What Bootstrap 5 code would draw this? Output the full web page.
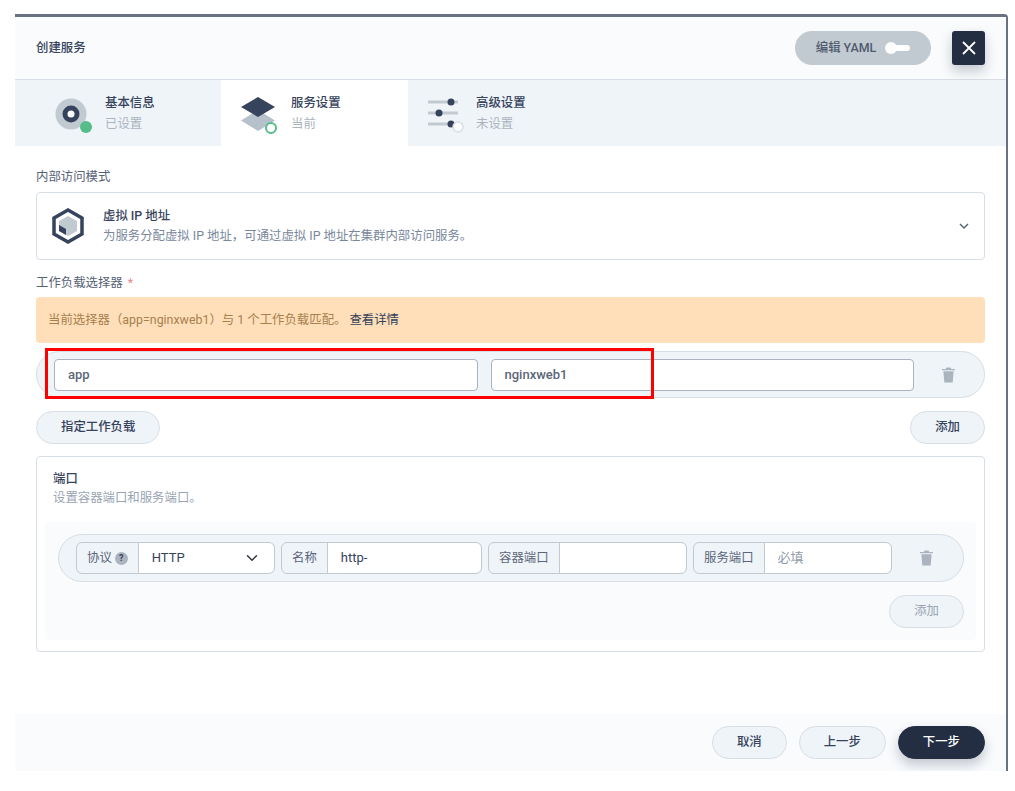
<!DOCTYPE html>
<html lang="zh-Hans">

<head>
    <meta charset="UTF-8">
    <meta name="viewport" content="width=device-width, initial-scale=1">
    <title>创建服务</title>
    <link href="https://cdn.jsdelivr.net/npm/bootstrap@5.3.3/dist/css/bootstrap.min.css" rel="stylesheet">
    <style>
        body {
            margin: 0;
            background: #fff;
            font-family: Roboto, "Noto Sans CJK SC", sans-serif;
            font-size: 12.4px;
            line-height: 1.5;
            color: #242e42;
        }

        .shell {
            margin: 14px 7px 0 15px;
            height: 757px;
            border-top: 3px solid #6a7282;
            border-right: 2px solid #6a7282;
            border-top-right-radius: 4px;
        }

        .top-bar {
            height: 63px;
            padding: 0 21px;
            background: #f9fbfd;
            border-bottom: 1px solid #d8dee5;
        }

        .page-title {
            font-weight: 500;
            color: #36435c;
        }

        .yaml-pill {
            width: 136px;
            height: 34px;
            border-radius: 17px;
            background: #c1c9d1;
            color: #4f5b6d;
            font-weight: 500;
            gap: 9px;
        }

        .yaml-knob {
            width: 25px;
            height: 12px;
            position: relative;
        }

        .yaml-knob::before {
            content: "";
            position: absolute;
            left: 8px;
            right: 0;
            top: 3px;
            height: 6px;
            border-radius: 3px;
            background: #fff;
        }

        .yaml-knob::after {
            content: "";
            position: absolute;
            left: 0;
            top: 0;
            width: 12px;
            height: 12px;
            border-radius: 50%;
            background: #fff;
        }

        .close-box {
            width: 33px;
            height: 34px;
            margin-left: 21px;
            border-radius: 3px;
            background: #242e42;
            box-shadow: 0 6px 12px rgba(36, 46, 66, .25);
        }

        .step-bar {
            height: 66px;
            background: #eff4f9;
        }

        .step-item {
            padding-top: 13px;
            padding-left: 40px;
            gap: 12px;
        }

        .step-one {
            width: 206px;
        }

        .step-two {
            width: 187px;
            padding-left: 20px;
            background: #fff;
        }

        .step-three {
            padding-left: 20px;
            gap: 10px;
        }

        .step-title {
            font-weight: 500;
            color: #36435c;
            line-height: 20px;
        }

        .step-note {
            color: #abb4be;
            line-height: 20px;
            margin-top: 1px;
        }

        .form-area {
            height: 568px;
            padding: 23px 21px 0;
        }

        .field-label {
            color: #566275;
            line-height: 16px;
            margin-bottom: 7px;
        }

        .mode-select {
            height: 68px;
            padding: 0 14px;
            gap: 18px;
            border: 1px solid #d8dee5;
            border-radius: 4px;
        }

        .mode-name {
            font-weight: 500;
            color: #36435c;
            line-height: 20px;
        }

        .mode-desc {
            color: #79879c;
            line-height: 20px;
        }

        .tip-bar {
            height: 46px;
            padding: 0 12px;
            border-radius: 4px;
            background: #fedfb9;
            color: #a8804e;
        }

        .tip-bar span {
            margin-left: 3px;
            color: #36435c;
        }

        .req-mark {
            color: #e58a88;
            margin-left: 2px;
        }

        .label-row {
            margin-top: 15px;
            margin-bottom: 6px;
        }

        .pair-row {
            position: relative;
            height: 47px;
            margin-top: 8px;
            padding: 0 15px 0 17px;
            gap: 13px;
            border: 1px solid #d8dee5;
            border-radius: 24px;
            background: #eff4f9;
        }

        .pair-input.form-control {
            flex: 1;
            height: 32px;
            padding: 0 13px;
            border: 1px solid #abb4be;
            border-radius: 4px;
            font-size: 13px;
            font-weight: 500;
            color: #5b6679;
        }

        .trash-cell {
            width: 42px;
            flex: none;
        }

        .red-mark {
            position: absolute;
            left: 8px;
            top: -4px;
            width: 609px;
            height: 51px;
            border: 3px solid #f00;
            pointer-events: none;
        }

        .pill-btn {
            height: 33px;
            padding: 0 24px;
            border: 1px solid #d8dee5;
            border-radius: 17px;
            background: #eff4f9;
            color: #36435c;
            font-size: 12.4px;
            font-weight: 500;
        }

        .pill-dim {
            color: #9aa5b1;
            font-weight: 400;
        }

        .pill-dark {
            background: #242e42;
            border-color: #242e42;
            color: #fff;
            box-shadow: 0 6px 12px rgba(36, 46, 66, .25);
        }

        .action-row {
            margin-top: 13px;
        }

        .port-box {
            height: 196px;
            margin-top: 12px;
            padding: 12px 8px 11px;
            border: 1px solid #d8dee5;
            border-radius: 4px;
        }

        .port-head {
            padding-left: 8px;
            line-height: 19px;
        }

        .port-head b {
            display: block;
            color: #36435c;
            font-weight: 500;
        }

        .port-head div {
            color: #98a4b3;
        }

        .port-inner {
            height: 118px;
            margin-top: 15px;
            padding: 12px 12px 0 13px;
            border-radius: 4px;
            background: #f9fbfd;
        }

        .port-row {
            height: 48px;
            padding-left: 17px;
            gap: 6px;
            border: 1px solid #d8dee5;
            border-radius: 24px;
            background: #eff4f9;
        }

        .port-group.input-group {
            width: 199px;
            height: 32px;
            flex: none;
            flex-wrap: nowrap;
        }

        .port-name.input-group {
            width: 201px;
        }

        .port-group .input-group-text {
            padding: 0 10px;
            font-size: 12.4px;
            color: #5b6679;
            background: #eff4f9;
            border-color: #c1c9d1;
        }

        .port-group .form-control,
        .port-group .form-select {
            padding: 0 13px;
            font-size: 13px;
            color: #36435c;
            border-color: #c1c9d1;
            background-position: right 14px center;
        }

        .port-group .form-control::placeholder {
            color: #8f9aa8;
        }

        .help-dot {
            display: inline-block;
            width: 13px;
            height: 13px;
            margin-left: 3px;
            border-radius: 50%;
            background: #abb4be;
            color: #36435c;
            font-size: 9px;
            font-weight: 700;
            line-height: 13px;
            text-align: center;
        }

        .port-trash {
            width: 56px;
            flex: none;
        }

        .add-port {
            margin-top: 13px;
        }

        .bottom-bar {
            height: 57px;
            padding: 0 21px;
            gap: 12px;
            background: #f9fbfd;
        }
    </style>
</head>

<body>
    <div class="shell d-flex flex-column">
        <div class="top-bar d-flex justify-content-between align-items-center">
            <div class="page-title">创建服务</div>
            <div class="d-flex align-items-center">
                <div class="yaml-pill d-flex align-items-center justify-content-center">
                    <span>编辑 YAML</span>
                    <span class="yaml-knob"></span>
                </div>
                <div class="close-box d-flex align-items-center justify-content-center">
                    <svg width="16" height="16" viewBox="0 0 16 16" fill="none" stroke="#fff" stroke-width="1.8">
                        <path d="M2 2l12 12M14 2L2 14" />
                    </svg>
                </div>
            </div>
        </div>

        <div class="step-bar d-flex">
            <div class="step-item step-one d-flex">
                <svg width="38" height="42" viewBox="0 0 38 42">
                    <circle cx="16" cy="21" r="15.500" fill="#c1c9d1" />
                    <circle cx="16" cy="21" r="8.500" fill="#36435c" />
                    <circle cx="16" cy="21" r="3.500" fill="#fff" />
                    <circle cx="31" cy="34" r="6" fill="#55bc8a" />
                </svg>
                <div>
                    <div class="step-title">基本信息</div>
                    <div class="step-note">已设置</div>
                </div>
            </div>
            <div class="step-item step-two d-flex">
                <svg width="38" height="42" viewBox="0 0 38 42">
                    <path d="M17 17l17 10.500L17 38 0 27.500z" fill="#b7c1cb" />
                    <path d="M17 4l17 10L17 24 0 14z" fill="#36435c" />
                    <circle cx="30" cy="35" r="5" fill="#fff" stroke="#55bc8a" stroke-width="2" />
                </svg>
                <div>
                    <div class="step-title">服务设置</div>
                    <div class="step-note">当前</div>
                </div>
            </div>
            <div class="step-item step-three d-flex">
                <svg width="38" height="42" viewBox="0 0 38 42">
                    <path d="M0 9h30M0 20h30M0 31h26" stroke="#c1c9d1" stroke-width="3" />
                    <circle cx="23" cy="9" r="3.500" fill="#36435c" />
                    <circle cx="11" cy="20" r="3.500" fill="#36435c" />
                    <circle cx="23" cy="31" r="3.500" fill="#36435c" />
                    <circle cx="30" cy="34" r="5" fill="#fff" stroke="#d8dee5" stroke-width="1.500" />
                </svg>
                <div>
                    <div class="step-title">高级设置</div>
                    <div class="step-note">未设置</div>
                </div>
            </div>
        </div>

        <div class="form-area flex-grow-1">
            <div class="field-label">内部访问模式</div>
            <div class="mode-select d-flex align-items-center">
                <svg width="34" height="36" viewBox="0 0 34 36">
                    <path d="M17 2l14 8v16l-14 8-14-8V10z" fill="#fff" stroke="#36435c" stroke-width="3.500" />
                    <path d="M17 8l9 5v10l-9 5-9-5V13z" fill="#c1c9d1" />
                    <path d="M8 17l7 4v6l-7-4z" fill="#36435c" />
                </svg>
                <div class="flex-grow-1">
                    <div class="mode-name">虚拟 IP 地址</div>
                    <div class="mode-desc">为服务分配虚拟 IP 地址，可通过虚拟 IP 地址在集群内部访问服务。</div>
                </div>
                <svg width="12" height="12" viewBox="0 0 12 12" fill="none" stroke="#5b6679" stroke-width="1.500">
                    <path d="M2 4l4 4 4-4" />
                </svg>
            </div>

            <div class="field-label label-row">工作负载选择器 <span class="req-mark">*</span></div>
            <div class="tip-bar d-flex align-items-center">当前选择器（app=nginxweb1）与 1 个工作负载匹配。<span>查看详情</span></div>
            <div class="pair-row d-flex align-items-center">
                <input class="pair-input form-control" type="text" value="app">
                <input class="pair-input form-control" type="text" value="nginxweb1">
                <div class="trash-cell d-flex justify-content-center">
                    <svg width="13" height="16" viewBox="0 0 14 16" fill="#abb4be">
                        <path d="M5 0h4l1 1.500h4V3H0V1.500h4zM1.500 4h11l-1 12h-9z" />
                    </svg>
                </div>
                <div class="red-mark"></div>
            </div>

            <div class="action-row d-flex justify-content-between">
                <button class="pill-btn" type="button">指定工作负载</button>
                <button class="pill-btn" type="button">添加</button>
            </div>

            <div class="port-box">
                <div class="port-head">
                    <b>端口</b>
                    <div>设置容器端口和服务端口。</div>
                </div>
                <div class="port-inner">
                    <div class="port-row d-flex align-items-center">
                        <div class="port-group input-group">
                            <span class="input-group-text">协议<span class="help-dot">?</span></span>
                            <select class="form-select">
                                <option>HTTP</option>
                            </select>
                        </div>
                        <div class="port-group port-name input-group">
                            <span class="input-group-text">名称</span>
                            <input class="form-control" type="text" value="http-">
                        </div>
                        <div class="port-group input-group">
                            <span class="input-group-text">容器端口</span>
                            <input class="form-control" type="text">
                        </div>
                        <div class="port-group input-group">
                            <span class="input-group-text">服务端口</span>
                            <input class="form-control" type="text" placeholder="必填">
                        </div>
                        <div class="port-trash d-flex justify-content-center">
                            <svg width="13" height="16" viewBox="0 0 14 16" fill="#abb4be">
                                <path d="M5 0h4l1 1.500h4V3H0V1.500h4zM1.500 4h11l-1 12h-9z" />
                            </svg>
                        </div>
                    </div>
                    <div class="add-port d-flex justify-content-end">
                        <button class="pill-btn pill-dim" type="button">添加</button>
                    </div>
                </div>
            </div>
        </div>

        <div class="bottom-bar d-flex justify-content-end align-items-center">
            <button class="pill-btn" type="button">取消</button>
            <button class="pill-btn" type="button">上一步</button>
            <button class="pill-btn pill-dark" type="button">下一步</button>
        </div>
    </div>
    <script src="https://cdn.jsdelivr.net/npm/bootstrap@5.3.3/dist/js/bootstrap.bundle.min.js"></script>
</body>

</html>
